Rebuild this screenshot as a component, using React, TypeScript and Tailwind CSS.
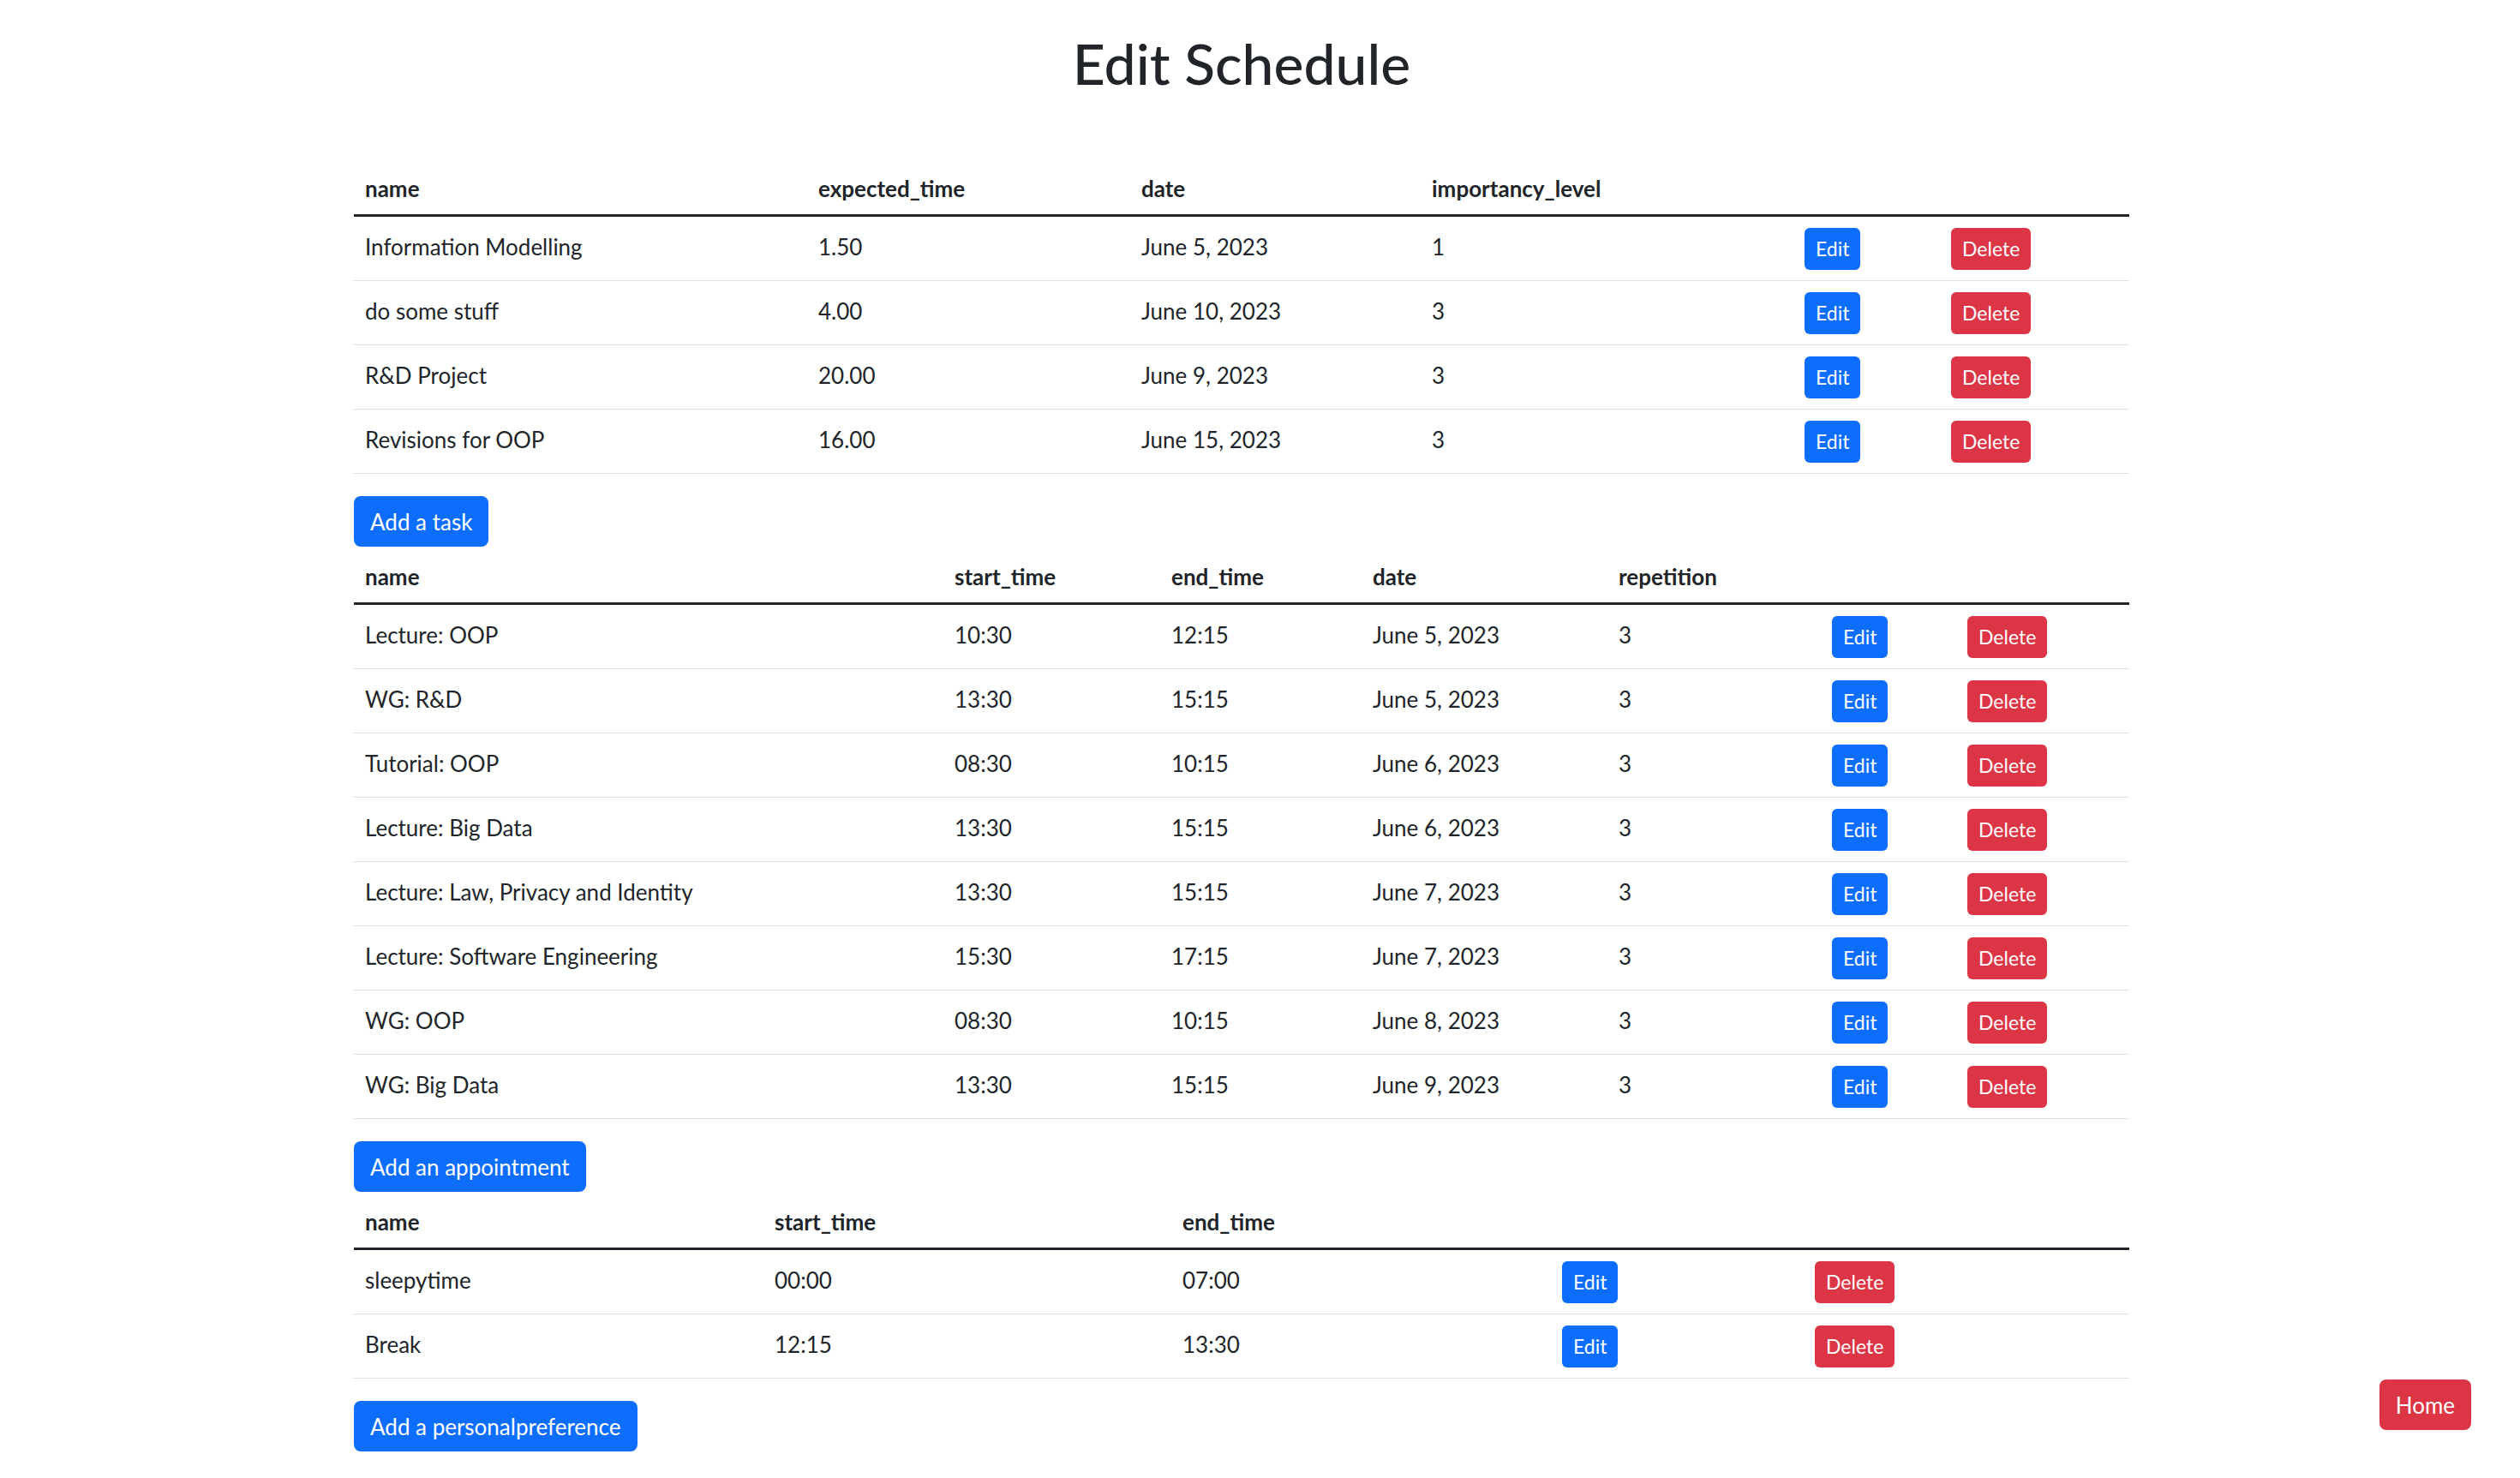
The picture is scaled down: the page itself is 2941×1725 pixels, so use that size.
import React from 'react';

interface Column {
  label: string;
  width: string;
}

interface ScheduleTableProps {
  columns: Column[];
  editWidth: string;
  deleteWidth: string;
  rows: string[][];
}

const taskColumns: Column[] = [
  { label: 'name', width: 'w-[529px]' },
  { label: 'expected_time', width: 'w-[377px]' },
  { label: 'date', width: 'w-[339px]' },
  { label: 'importancy_level', width: 'w-[435px]' },
];

const tasks: string[][] = [
  ['Information Modelling', '1.50', 'June 5, 2023', '1'],
  ['do some stuff', '4.00', 'June 10, 2023', '3'],
  ['R&D Project', '20.00', 'June 9, 2023', '3'],
  ['Revisions for OOP', '16.00', 'June 15, 2023', '3'],
];

const appointmentColumns: Column[] = [
  { label: 'name', width: 'w-[688px]' },
  { label: 'start_time', width: 'w-[253px]' },
  { label: 'end_time', width: 'w-[235px]' },
  { label: 'date', width: 'w-[287px]' },
  { label: 'repetition', width: 'w-[249px]' },
];

const appointments: string[][] = [
  ['Lecture: OOP', '10:30', '12:15', 'June 5, 2023', '3'],
  ['WG: R&D', '13:30', '15:15', 'June 5, 2023', '3'],
  ['Tutorial: OOP', '08:30', '10:15', 'June 6, 2023', '3'],
  ['Lecture: Big Data', '13:30', '15:15', 'June 6, 2023', '3'],
  ['Lecture: Law, Privacy and Identity', '13:30', '15:15', 'June 7, 2023', '3'],
  ['Lecture: Software Engineering', '15:30', '17:15', 'June 7, 2023', '3'],
  ['WG: OOP', '08:30', '10:15', 'June 8, 2023', '3'],
  ['WG: Big Data', '13:30', '15:15', 'June 9, 2023', '3'],
];

const preferenceColumns: Column[] = [
  { label: 'name', width: 'w-[478px]' },
  { label: 'start_time', width: 'w-[476px]' },
  { label: 'end_time', width: 'w-[443px]' },
];

const preferences: string[][] = [
  ['sleepytime', '00:00', '07:00'],
  ['Break', '12:15', '13:30'],
];

const ScheduleTable: React.FC<ScheduleTableProps> = ({ columns, editWidth, deleteWidth, rows }) => {
  return (
    <table className="w-full table-fixed border-collapse text-left text-[26px] leading-[39px] text-[#212529] mb-[26px]">
      <thead>
        <tr>
          {columns.map((col) => (
            <th key={col.label} className={`${col.width} px-[13px] pt-[16px] pb-[10px] font-bold border-b-[3px] border-[#212529]`}>
              {col.label}
            </th>
          ))}
          <th className={`${editWidth} border-b-[3px] border-[#212529]`}></th>
          <th className={`${deleteWidth} border-b-[3px] border-[#212529]`}></th>
        </tr>
      </thead>
      <tbody>
        {rows.map((row, i) => (
          <tr key={i}>
            {row.map((cell, j) => (
              <td key={j} className="px-[13px] pt-[11px] pb-[14px] align-middle border-b border-[#dee2e6]">
                {cell}
              </td>
            ))}
            <td className="px-[13px] pt-[13px] pb-[12px] align-middle border-b border-[#dee2e6]">
              <button className="inline-flex items-center h-[49px] px-[13px] rounded-[6px] bg-[#0d6efd] text-white text-[23px] leading-none">
                Edit
              </button>
            </td>
            <td className="px-[13px] pt-[13px] pb-[12px] align-middle border-b border-[#dee2e6]">
              <button className="inline-flex items-center h-[49px] px-[13px] rounded-[6px] bg-[#dc3545] text-white text-[23px] leading-none">
                Delete
              </button>
            </td>
          </tr>
        ))}
      </tbody>
    </table>
  );
};

const AddButton: React.FC<{ label: string }> = ({ label }) => (
  <button className="inline-flex items-center h-[59px] px-[19px] rounded-[8px] bg-[#0d6efd] text-white text-[26px] leading-none">
    {label}
  </button>
);

export default function App() {
  return (
    <div className="min-h-screen bg-white font-['Lato',sans-serif] text-[#212529]">
      <div className="w-[2898px]">
        <div className="mx-auto w-[2072px] pt-[34px]">
          <h1 className="text-center text-[66px] font-medium leading-[1.2] mb-[72px]">Edit Schedule</h1>

          <ScheduleTable columns={taskColumns} editWidth="w-[171px]" deleteWidth="w-[221px]" rows={tasks} />
          <AddButton label="Add a task" />

          <ScheduleTable columns={appointmentColumns} editWidth="w-[158px]" deleteWidth="w-[202px]" rows={appointments} />
          <AddButton label="Add an appointment" />

          <ScheduleTable columns={preferenceColumns} editWidth="w-[295px]" deleteWidth="w-[380px]" rows={preferences} />
          <AddButton label="Add a personalpreference" />
        </div>
      </div>

      <button className="fixed right-[57px] bottom-[56px] inline-flex items-center h-[59px] px-[19px] rounded-[8px] bg-[#dc3545] text-white text-[26px] leading-none">
        Home
      </button>
    </div>
  );
}
